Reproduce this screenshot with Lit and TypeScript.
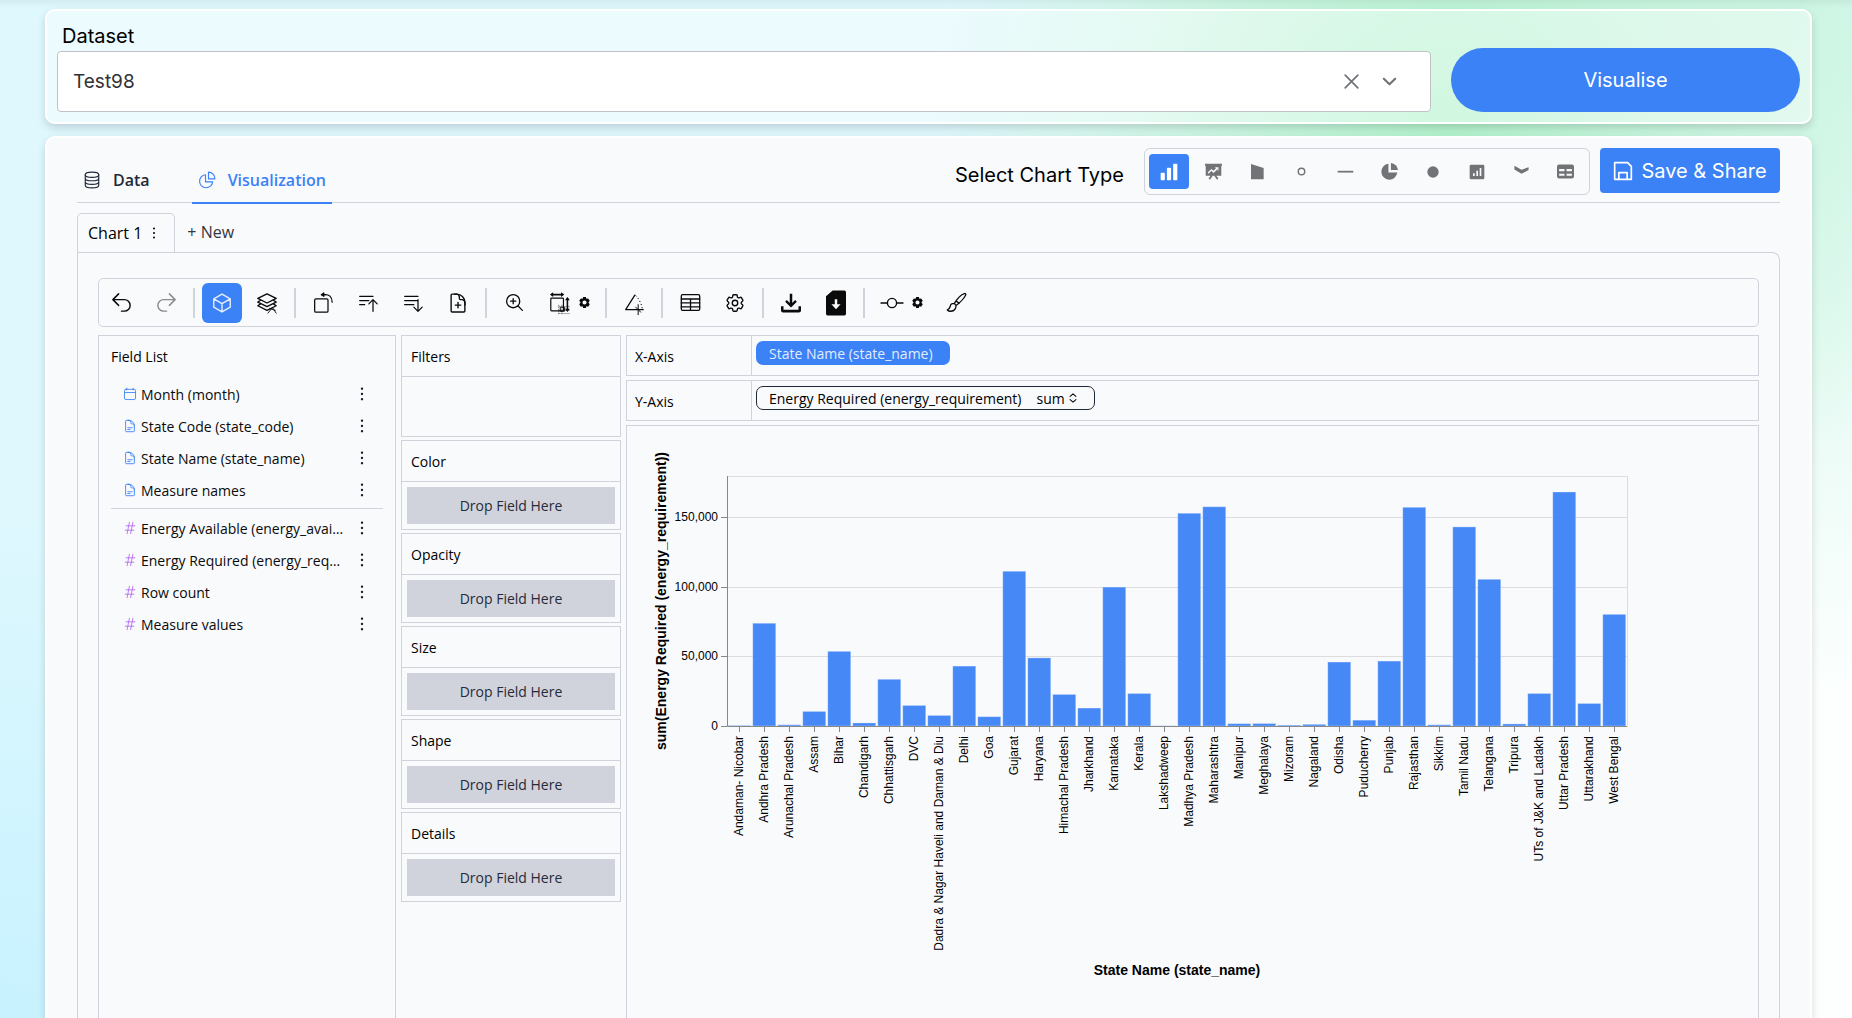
import { LitElement, html, css, svg } from "lit";
import { customElement, state } from "lit/decorators.js";
import { classMap } from "lit/directives/class-map.js";

const DOC =
  "M19.5 14.25v-2.625a3.375 3.375 0 0 0-3.375-3.375h-1.5A1.125 1.125 0 0 1 13.5 7.125v-1.5a3.375 3.375 0 0 0-3.375-3.375H8.25";
const DOC_BODY =
  "M10.5 2.25H5.625c-.621 0-1.125.504-1.125 1.125v17.25c0 .621.504 1.125 1.125 1.125h12.75c.621 0 1.125-.504 1.125-1.125V11.25a9 9 0 0 0-9-9Z";
const COG =
  "M9.594 3.94c.09-.542.56-.94 1.11-.94h2.593c.55 0 1.02.398 1.11.94l.213 1.281c.063.374.313.686.645.87.074.04.147.083.22.127.325.196.72.257 1.075.124l1.217-.456a1.125 1.125 0 0 1 1.37.49l1.296 2.247a1.125 1.125 0 0 1-.26 1.431l-1.003.827c-.293.241-.438.613-.43.992a7.723 7.723 0 0 1 0 .255c-.008.378.137.75.43.991l1.004.827c.424.35.534.955.26 1.43l-1.298 2.247a1.125 1.125 0 0 1-1.369.491l-1.217-.456c-.355-.133-.75-.072-1.076.124a6.47 6.47 0 0 1-.22.128c-.331.183-.581.495-.644.869l-.213 1.281c-.09.543-.56.94-1.11.94h-2.594c-.55 0-1.019-.398-1.11-.94l-.213-1.281c-.062-.374-.312-.686-.644-.87a6.52 6.52 0 0 1-.22-.127c-.325-.196-.72-.257-1.076-.124l-1.217.456a1.125 1.125 0 0 1-1.369-.49l-1.297-2.247a1.125 1.125 0 0 1 .26-1.431l1.004-.827c.292-.24.437-.613.43-.991a6.932 6.932 0 0 1 0-.255c.007-.38-.138-.751-.43-.992l-1.004-.827a1.125 1.125 0 0 1-.26-1.43l1.297-2.247a1.125 1.125 0 0 1 1.37-.491l1.216.456c.356.133.751.072 1.076-.124.072-.044.146-.086.22-.128.332-.183.582-.495.644-.869l.214-1.28Z";

/* Stroke icons share a 24-unit grid; a name maps to its shapes. */
const LINE: Record<string, unknown> = {
  undo: svg`<path d="M9 15 3 9m0 0 6-6M3 9h12a6 6 0 0 1 0 12h-3"/>`,
  redo: svg`<path d="m15 15 6-6m0 0-6-6m6 6H9a6 6 0 0 0 0 12h3"/>`,
  cube: svg`<path d="m21 7.5-9-5.25L3 7.5m18 0-9 5.25m9-5.25v9l-9 5.25M3 7.5l9 5.25M3 7.5v9l9 5.25m0-9v9"/>`,
  layers: svg`<path d="M12 2 2 7l10 5 10-5zM5 9l-3 2 10 5 10-5-3-2M5 13l-3 2 10 5 10-5-3-2"/><path stroke-width="1" d="m13 23 5-6 4 6m-7-5 6 2"/>`,
  transpose: svg`<rect x="2" y="7" width="16" height="16" rx="1.5"/><path d="M14 2c5-.3 9 2 9 9"/><path d="M11 2h4"/><path fill="currentColor" d="M13 0v4L10 2z"/>`,
  sortUp: svg`<path d="M2 4h16M2 9h11M2 14h6m5-1 5-5 5 5m-5-5v14"/>`,
  sortDown: svg`<path d="M2 4h16M2 9h16M2 14h11m5-6v14m0 0-5-5m5 5 5-5"/>`,
  addDoc: svg`<path d=${DOC + "m3.75 9v6m3-3H9"}/><path d=${DOC_BODY}/>`,
  textDoc: svg`<path d=${DOC + "m0 12.75h7.5m-7.5 3H12"}/><path d=${DOC_BODY}/>`,
  date: svg`<rect x="2.5" y="4" width="19" height="17.5" rx="2.5"/><path d="M6.5 2v3m11-3v3M3 9.5h18"/>`,
  number: svg`<path d="M5.25 8.25h15m-16.5 7.5h15m-1.8-13.5-3.9 19.5m-2.1-19.5-3.9 19.5"/>`,
  zoom: svg`<path d="m21 21-5.197-5.197m0 0A7.5 7.5 0 1 0 5.196 5.196a7.5 7.5 0 0 0 10.607 10.607ZM10.5 7.5v6m3-3h-6"/>`,
  resize: svg`<rect x="1" y="6.500" width="16" height="16" rx="1"/><path stroke-width="2" d="M2 2h14"/><path stroke-width="2" d="M22 7v14"/><path fill="currentColor" stroke="none" d="M0 2 4-1v6zM18 2l-4-3v6zM22 5l-3 4h6zM22 24l-3-4h6z"/><path stroke-width="1.200" d="M13.500 18h5v5h-5z"/><path stroke-width="1" stroke-linecap="butt" stroke-dasharray="1 1.500" d="M11 15v12m4-12v12M11 17h14M11 22h14M11 26h14"/>`,
  angle: svg`<path d="M13 2.500 2 20h21"/><path stroke-width="1.200" stroke-linecap="butt" stroke-dasharray="1.500 2.500" d="M14 3c4 4 7 10 8 16"/><path stroke-width="1.200" d="M17 14v12m-3-9 6 6"/>`,
  table: svg`<rect x="1.500" y="3" width="21" height="18" rx="1.500"/><path d="M1.500 8h21M1.500 12.500h21M1.500 17h21M12 8v13"/>`,
  cog: svg`<path d=${COG}/><path d="M15 12a3 3 0 1 1-6 0 3 3 0 0 1 6 0Z"/>`,
  commit: svg`<circle cx="12" cy="12" r="5"/><path d="M0 12h7m10 0h7"/>`,
  brush: svg`<path d="M9.500 13C12 9 17 3 21 1.800c1.300-.3 2 .6 1.500 1.700C21 7 15 13 11.500 15.500zM9.500 13c-1.500 0-2.800 0-3.800 1.200C4.500 16 5 19.500 1.500 20.500c2 2.200 6.500 2 8.500-.5 1.200-1.500 1.500-3 1.500-4.500M12 10.500l3 2.500"/>`,
  database: svg`<ellipse cx="12" cy="5" rx="9" ry="3.500"/><path d="M3 5v14c0 2 4 3.500 9 3.500s9-1.500 9-3.500V5M3 9.500c0 2 4 3.500 9 3.500s9-1.500 9-3.500M3 14.300c0 2 4 3.500 9 3.500s9-1.500 9-3.500"/>`,
  pie: svg`<path d="M10 5a8.700 8.700 0 1 0 9.500 9.500H10z"/><path d="M14 1.500v9h8.500a8.700 8.700 0 0 0-8.500-9z"/>`,
  save: svg`<path stroke-width="2" d="M2 2h15.500L22 6.500V22H2z"/><path stroke-width="2" d="M7 22v-8h10v8"/>`,
  close: svg`<path stroke-width="2.200" d="M4 4l16 16M20 4 4 20"/>`,
  down: svg`<path stroke-width="3" d="m4 8 8 8 8-8"/>`,
  updown: svg`<path stroke-width="2.500" d="m5 8 7-6 7 6M5 16l7 6 7-6"/>`,
};

const SOLID: Record<string, unknown> = {
  bar: svg`<rect x="2" y="13" width="5" height="9" rx="1"/><rect x="9.500" y="7" width="5" height="15" rx="1"/><rect x="17" y="2" width="5" height="20" rx="1"/>`,
  board: svg`<path fill-rule="evenodd" d="M0 1h24v3h-1v14H16l3 4-2 1.500-4-5.500h-2l-4 5.500L5 22l3-4H1V4H0zM5 15l4-4 3 3 6-5.500V11l1-.5V6h-5l1.500 1.500L12 11 9 8.500 4 13z"/>`,
  area: svg`<path d="M3 0l19 6v17H3z"/>`,
  ring: svg`<circle cx="12" cy="12" r="4.600" fill="none" stroke="currentColor" stroke-width="2"/>`,
  line: svg`<rect x="1" y="11" width="22" height="2.500"/>`,
  pie: svg`<path d="M10.500 1v12.500H23A11.300 11.300 0 1 1 10.500 1z"/><path d="M14 0a11 11 0 0 1 10 10H14z"/>`,
  dot: svg`<circle cx="12" cy="12" r="8.500"/>`,
  box: svg`<path fill-rule="evenodd" d="M3 1h18q2 0 2 2v18q0 2-2 2H3q-2 0-2-2V3q0-2 2-2zM6 14v4h2.500v-4zM11 10v8h2.500v-8zM16 6v12h2.500V6z"/>`,
  curve: svg`<path d="M2 4l10 5.500L22 6v4l-10 5L2 9z"/>`,
  grid: svg`<path fill-rule="evenodd" d="M3 2h18q3 0 3 3v14q0 3-3 3H3q-3 0-3-3V5q0-3 3-3zM3 8.500v3h7.500v-3zM13.500 8.500v3H21v-3zM3 15v3h7.500v-3zM13.500 15v3H21v-3z"/>`,
  download: svg`<path d="M10.500 1h3v11l3.500-3.500 2 2-7 7-7-7 2-2 3.500 3.500zM0 16h3v4h18v-4h3v5q0 2.500-2.500 2.500h-19Q0 23.500 0 21z"/>`,
  file: svg`<path fill-rule="evenodd" d="M8-3h14q2 0 2 2v26q0 2-2 2H2q-2 0-2-2V4zM10.500 7.500v6H6.500l5.500 6 5.500-6h-4v-6z"/>`,
  gear: svg`<path fill-rule="evenodd" d="M9 0h6l1 4 4-1 3.500 5-3 4 3 4-3.500 5-4-1-1 4H9l-1-4-4 1-3.500-5 3-4-3-4L4 3l4 1zM12 7.500a4.500 4.500 0 1 0 0 9 4.500 4.500 0 0 0 0-9z"/>`,
  dots: svg`<circle cx="12" cy="3" r="2"/><circle cx="12" cy="12" r="2"/><circle cx="12" cy="21" r="2"/>`,
};

const line = (name: string, size = 22) => html`<svg class="line" width=${size} height=${size} viewBox="0 0 24 24" aria-hidden="true">${LINE[name]}</svg>`;
const solid = (name: string, size = 17) => html`<svg class="solid" width=${size} height=${size} viewBox="0 0 24 24" aria-hidden="true">${SOLID[name]}</svg>`;

const BARS: [string, number][] = [
  ["Andaman- Nicobar", 350], ["Andhra Pradesh", 73900], ["Arunachal Pradesh", 900],
  ["Assam", 10500], ["Bihar", 53700], ["Chandigarh", 2200], ["Chhattisgarh", 33600],
  ["DVC", 14800], ["Dadra & Nagar Haveli and Daman & Diu", 7600], ["Delhi", 43100],
  ["Goa", 6700], ["Gujarat", 111300], ["Haryana", 49000], ["Himachal Pradesh", 22700],
  ["Jharkhand", 12900], ["Karnataka", 99900], ["Kerala", 23400], ["Lakshadweep", 50],
  ["Madhya Pradesh", 153000], ["Maharashtra", 157700], ["Manipur", 1700],
  ["Meghalaya", 1800], ["Mizoram", 600], ["Nagaland", 1200], ["Odisha", 46000],
  ["Puducherry", 4200], ["Punjab", 46700], ["Rajasthan", 157300], ["Sikkim", 900],
  ["Tamil Nadu", 143200], ["Telangana", 105500], ["Tripura", 1500],
  ["UTs of J&K and Ladakh", 23400], ["Uttar Pradesh", 168300], ["Uttarakhand", 16200],
  ["West Bengal", 80300],
];

@customElement("bar-chart")
class BarChart extends LitElement {
  static styles = css`
    :host { display: block; padding: 18px 24px 0; overflow: hidden; }
    svg { display: block; font-family: "Liberation Sans", Arial, sans-serif; font-size: 12px; }
    .grid { stroke: #dddddf; fill: none; }
    .axis { stroke: #888; }
    .tick { stroke: #888; }
    .bar { fill: #3b82f6; fill-opacity: 0.95; stroke: #fff; stroke-opacity: 0.3; }
    .title { font-weight: bold; font-size: 14px; }
  `;
  render() {
    const left = 76, top = 32, width = 900, height = 250, max = 179800;
    const base = top + height;
    const step = width / BARS.length;
    const y = (v: number) => Math.round(base - (v / max) * height);
    return html`<svg width="990" height="540" role="img" aria-label="Energy Required by State Name">
      <rect class="grid" x=${left + 0.5} y=${top + 0.5} width=${width} height=${height}></rect>
      ${[50000, 100000, 150000].map((v) => svg`<line class="grid" x1=${left} x2=${left + width} y1=${y(v) + 0.5} y2=${y(v) + 0.5}></line>`)}
      ${BARS.map(([, v], i) => {
        const h = Math.max((v / max) * height, 0.2);
        return svg`<rect class="bar" x=${left + i * step + 0.75} y=${base - h} width="23" height=${h}></rect>`;
      })}
      <path class="axis" d=${`M${left + 0.5} ${top}V${base + 0.5}H${left + width}`} fill="none"></path>
      ${[0, 50000, 100000, 150000].map((v) => svg`
        <line class="tick" x1=${left - 6} x2=${left} y1=${y(v) + 0.5} y2=${y(v) + 0.5}></line>
        <text text-anchor="end" x=${left - 9} y=${y(v) + 4}>${v.toLocaleString("en-US")}</text>`)}
      ${BARS.map(([name], i) => {
        const x = left + i * step + 12.5;
        return svg`<line class="tick" x1=${x} x2=${x} y1=${base} y2=${base + 6}></line>
        <text text-anchor="end" transform=${`translate(${x + 3} ${base + 10}) rotate(-90)`}>${name}</text>`;
      })}
      <text class="title" text-anchor="middle" x=${left + width / 2} y="531">State Name (state_name)</text>
      <text class="title" text-anchor="middle" transform=${`translate(15 ${top + height / 2}) rotate(-90)`}>sum(Energy Required (energy_requirement))</text>
    </svg>`;
  }
}

const CHART_TYPES = [
  ["bar", "Bar"], ["board", "Line"], ["area", "Area"], ["ring", "Point"], ["line", "Tick"],
  ["pie", "Arc"], ["dot", "Circle"], ["box", "Boxplot"], ["curve", "Trail"], ["grid", "Table"],
];
const DIMENSIONS = [
  ["date", "Month (month)"], ["textDoc", "State Code (state_code)"],
  ["textDoc", "State Name (state_name)"], ["textDoc", "Measure names"],
];
const MEASURES = [
  "Energy Available (energy_available)", "Energy Required (energy_requirement)", "Row count", "Measure values",
];
const CHANNELS = ["Color", "Opacity", "Size", "Shape", "Details"];

@customElement("app-root")
class AppRoot extends LitElement {
  @state() private chartType = "bar";

  static styles = css`
    :host { display: block; --line: #d1d3dc; --blue: #3b82f6; --ui: "Open Sans", "Noto Sans", sans-serif; }
    * { box-sizing: border-box; }
    button, select { font: inherit; color: inherit; border: 0; background: none; padding: 0; margin: 0; }
    button { cursor: pointer; display: flex; align-items: center; justify-content: center; }
    select { appearance: none; }
    svg { display: block; overflow: visible; flex: none; }
    .line { fill: none; stroke: currentColor; stroke-width: 1.5; stroke-linecap: round; stroke-linejoin: round; }
    .solid { fill: currentColor; }
    ul { list-style: none; margin: 0; padding: 0; }

    .page {
      min-height: 100vh; display: flex; flex-direction: column; gap: 12px;
      padding: 9px 40px 0 45px; overflow: hidden; font-family: var(--ui); font-size: 14px; color: #000;
      background:
        linear-gradient(#0000000d, #00000000 8px),
        radial-gradient(ellipse 520px 480px at 1450px 120px, #b2f2cc 0%, #c0f4d8cc 40%, #d6f7ea00 100%),
        radial-gradient(ellipse 700px 700px at 1800px 0, #d3f6ea 0%, #e0f8f000 100%),
        radial-gradient(ellipse 700px 500px at 0 100%, #c8f2ff 0%, #d8f6ff00 100%),
        linear-gradient(90deg, #def8fe 0%, #def8fe 50%, #fcfffe 95%);
    }
    .card { border: 2px solid #fff; border-radius: 10px; box-shadow: 0 4px 8px #00000026; }

    .picker { display: flex; align-items: flex-end; gap: 20px; padding: 10px; background: #ffffff66; }
    .dataset { flex: 1; display: flex; flex-direction: column; font-family: Inter, sans-serif; font-size: 19px; }
    .dataset label { line-height: 30px; padding-left: 5px; font-size: 20px; }
    .combo { display: flex; align-items: center; height: 61px; border: 1px solid #bfc3c8; border-radius: 4px; background: #fff; padding: 0 32px 0 15px; gap: 20px; color: #707378; }
    .combo select { flex: 1; height: 100%; color: #303236; }
    .visualise { width: 349px; height: 64px; border-radius: 32px; background: var(--blue); color: #fff; font-family: Inter, sans-serif; font-size: 20px; }

    .work { flex: 1; display: flex; flex-direction: column; padding: 10px 30px 0; background: #f9fafc; border-bottom: 0; border-radius: 10px 10px 0 0; }
    .head { display: flex; align-items: flex-start; border-bottom: 1px solid var(--line); height: 55px; font-family: Inter, sans-serif; }
    .tabs { display: flex; align-self: stretch; gap: 36px; flex: 1; font-family: var(--ui); font-size: 16px; font-weight: 600; color: #1f2937; }
    .tab { gap: 12px; padding: 10px 6px 0; height: 56px; border-bottom: 2px solid transparent; }
    .tab.active { color: var(--blue); border-color: var(--blue); }
    .caption { font-size: 20px; line-height: 54px; padding-right: 20px; }
    .types { display: flex; gap: 4px; padding: 5px 4px; border: 1px solid var(--line); border-radius: 6px; color: #717377; }
    .type { width: 40px; height: 35px; border-radius: 4px; }
    .type.active { background: var(--blue); color: #fff; }
    .save { height: 45px; width: 180px; gap: 8px; margin-left: 10px; border-radius: 4px; background: var(--blue); color: #fff; font-size: 20px; }

    .sheets { display: flex; gap: 12px; margin-top: 10px; height: 39px; font-size: 16px; }
    .sheet { display: flex; align-items: center; gap: 6px; padding: 0 14px 0 10px; border: 1px solid var(--line); border-bottom: 0; border-radius: 5px 5px 0 0; }
    .new { color: #33363d; padding-bottom: 2px; }
    .panel { flex: 1; display: flex; flex-direction: column; border: 1px solid var(--line); border-bottom: 0; border-radius: 0 8px 0 0; padding: 25px 20px 0; }

    .toolbar { display: flex; align-items: center; gap: 5px; height: 49px; padding: 0 2px; border: 1px solid var(--line); border-radius: 5px; color: #0a0a0a; }
    .tool { width: 40px; height: 40px; border-radius: 6px; }
    .tool.active { background: var(--blue); color: #e7eefc; }
    .tool.off { color: #8a8b8d; }
    .sep { width: 2px; height: 30px; margin: 0 2px; background: var(--line); }
    .split { display: flex; align-items: center; padding-right: 8px; }

    .columns { flex: 1; display: grid; grid-template-columns: 298px 220px 1fr; gap: 5px; margin-top: 8px; }
    .fields { border: 1px solid var(--line); border-bottom: 0; padding: 0 12px; }
    .fields h2, .shelf h2 { margin: 0; font-size: 14px; font-weight: 400; }
    .fields h2 { line-height: 42px; }
    .fields ul { padding: 0 11px 2px 12px; }
    .fields ul + ul { border-top: 1px solid var(--line); padding-top: 3px; }
    .field { display: flex; align-items: center; gap: 4px; height: 32px; color: #3b82f6; }
    .field.measure { color: #b26bf5; }
    .field span { flex: 1; min-width: 0; color: #0a0a0a; overflow: hidden; white-space: nowrap; text-overflow: ellipsis; }
    .more { width: 20px; height: 20px; margin-left: 2px; color: #111827; }

    .shelves { display: flex; flex-direction: column; gap: 3px; }
    .shelf { border: 1px solid var(--line); height: 90px; display: flex; flex-direction: column; }
    .shelf.filters { height: 102px; }
    .shelf h2 { height: 41px; line-height: 42px; padding-left: 9px; border-bottom: 1px solid var(--line); }
    .drop { flex: 1; margin: 5px; display: flex; align-items: center; justify-content: center; background: #d1d3dc; color: #252b38; }

    .view { display: flex; flex-direction: column; gap: 4px; min-width: 0; }
    .axis { display: flex; height: 41px; border: 1px solid var(--line); }
    .axis h2 { margin: 0; width: 125px; padding-left: 8px; font-size: 14px; font-weight: 400; line-height: 42px; border-right: 1px solid var(--line); }
    .slot { flex: 1; padding: 5px 4px; display: flex; align-items: flex-start; }
    .pill { display: flex; align-items: center; height: 24px; padding: 0 16px 0 12px; border: 1px solid transparent; border-radius: 7px; }
    .pill.dim { background: var(--blue); color: #e2ebfd; }
    .pill.agg { border-color: #1f2937; gap: 3px; }
    .pill.agg select { margin-left: 12px; }
    .canvas { flex: 1; border: 1px solid var(--line); border-bottom: 0; }
  `;

  private tool(icon: unknown, label: string, cls = "") {
    return html`<button class="tool ${cls}" aria-label=${label}>${icon}</button>`;
  }

  private more(label: string) {
    return html`<button class="more" aria-label=${`Options for ${label}`}>${solid("dots", 14)}</button>`;
  }

  render() {
    const sep = html`<div class="sep"></div>`;
    const gear = (l: string) => html`<button aria-label=${l}>${solid("gear", 11)}</button>`;
    return html`<div class="page">
      <section class="card picker">
        <div class="dataset">
          <label for="dataset">Dataset</label>
          <div class="combo">
            <select id="dataset"><option>Test98</option></select>
            <button aria-label="Clear">${line("close", 19)}</button>
            ${line("down", 17)}
          </div>
        </div>
        <button class="visualise">Visualise</button>
      </section>

      <main class="card work">
        <header class="head">
          <nav class="tabs">
            <button class="tab">${line("database", 18)}Data</button>
            <button class="tab active">${line("pie", 18)}Visualization</button>
          </nav>
          <div class="caption">Select Chart Type</div>
          <div class="types">
            ${CHART_TYPES.map(([id, label]) => html`<button
              class=${classMap({ type: true, active: this.chartType === id })}
              aria-label=${label} @click=${() => (this.chartType = id)}>${solid(id, id === "bar" ? 20 : id === "area" || id === "dot" || id === "box" ? 16 : 17)}</button>`)}
          </div>
          <button class="save">${line("save", 20)}Save &amp; Share</button>
        </header>

        <div class="sheets">
          <div class="sheet">Chart 1 <button aria-label="Chart 1 options">${solid("dots", 12)}</button></div>
          <button class="new">+ New</button>
        </div>
        <div class="panel">
          <div class="toolbar">
            ${this.tool(line("undo", 23), "Undo")}
            ${this.tool(line("redo", 23), "Redo", "off")}
            ${sep}
            ${this.tool(line("cube"), "Aggregation", "active")}
            ${this.tool(line("layers"), "Stack mode")}
            ${sep}
            ${this.tool(line("transpose", 20), "Transpose")}
            ${this.tool(line("sortUp", 20), "Sort ascending")}
            ${this.tool(line("sortDown", 20), "Sort descending")}
            ${this.tool(line("addDoc"), "New chart")}
            ${sep}
            ${this.tool(line("zoom", 21), "Axes resize")}
            <div class="split">${this.tool(line("resize", 19), "Layout mode")}${gear("Layout settings")}</div>
            ${sep}
            ${this.tool(line("angle", 20), "Coordinate system")}
            ${sep}
            ${this.tool(line("table", 21), "Table view")}
            ${this.tool(line("cog", 22), "Settings")}
            ${sep}
            ${this.tool(solid("download", 20), "Export")}
            ${this.tool(solid("file", 20), "Export code")}
            ${sep}
            <div class="split">${this.tool(line("commit", 22), "Limit")}${gear("Limit settings")}</div>
            ${this.tool(line("brush", 21), "Painter")}
          </div>

          <div class="columns">
            <section class="fields">
              <h2>Field List</h2>
              <ul>${DIMENSIONS.map(([icon, name]) => html`<li class="field">${line(icon, 14)}<span>${name}</span>${this.more(name)}</li>`)}</ul>
              <ul>${MEASURES.map((name) => html`<li class="field measure">${line("number", 14)}<span>${name}</span>${this.more(name)}</li>`)}</ul>
            </section>

            <section class="shelves">
              <div class="shelf filters"><h2>Filters</h2></div>
              ${CHANNELS.map((c) => html`<div class="shelf"><h2>${c}</h2><div class="drop">Drop Field Here</div></div>`)}
            </section>

            <section class="view">
              <div class="axis"><h2>X-Axis</h2><div class="slot"><div class="pill dim">State Name (state_name)</div></div></div>
              <div class="axis"><h2>Y-Axis</h2><div class="slot"><div class="pill agg">Energy Required (energy_requirement)
                <select aria-label="Aggregation"><option>sum</option></select>${line("updown", 10)}</div></div></div>
              <div class="canvas"><bar-chart></bar-chart></div>
            </section>
          </div>
        </div>
      </main>
    </div>`;
  }
}
